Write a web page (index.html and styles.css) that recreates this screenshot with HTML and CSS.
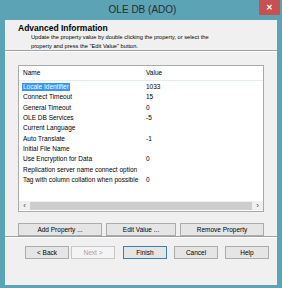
FILE: index.html
```html
<!DOCTYPE html>
<html lang="en">
<head>
    <title>OLE DB (ADO)</title>
    <link rel="stylesheet" href="styles.css">
</head>
<body>
<div class="window">
    <div class="titlebar">
        <span></span>
        <span class="title">OLE DB (ADO)</span>
        <span class="close">&#x2715;</span>
    </div>
    <div class="client">
        <div class="header">
            <h1>Advanced Information</h1>
            <p>Update the property value by double clicking the property, or select the<br>property and press the "Edit Value" button.</p>
        </div>
        <div class="content">
            <div class="listbox">
                <div class="list-head">
                    <span class="col-name">Name</span>
                    <span class="col-value">Value</span>
                </div>
                <div class="rows">
                    <div class="row selected"><span class="col-name"><em>Locale Identifier</em></span><span class="col-value">1033</span></div>
                    <div class="row"><span class="col-name">Connect Timeout</span><span class="col-value">15</span></div>
                    <div class="row"><span class="col-name">General Timeout</span><span class="col-value">0</span></div>
                    <div class="row"><span class="col-name">OLE DB Services</span><span class="col-value">-5</span></div>
                    <div class="row"><span class="col-name">Current Language</span><span class="col-value"></span></div>
                    <div class="row"><span class="col-name">Auto Translate</span><span class="col-value">-1</span></div>
                    <div class="row"><span class="col-name">Initial File Name</span><span class="col-value"></span></div>
                    <div class="row"><span class="col-name">Use Encryption for Data</span><span class="col-value">0</span></div>
                    <div class="row"><span class="col-name">Replication server name connect option</span><span class="col-value"></span></div>
                    <div class="row"><span class="col-name">Tag with column collation when possible</span><span class="col-value">0</span></div>
                </div>
                <div class="hscroll">
                    <span class="arrow">&lsaquo;</span>
                    <span class="thumb"></span>
                    <span class="arrow">&rsaquo;</span>
                </div>
            </div>
            <div class="actions">
                <button class="wide">Add Property ...</button>
                <button class="mid">Edit Value ...</button>
                <button class="wide">Remove Property</button>
            </div>
        </div>
        <div class="footer">
            <button>&lt; Back</button>
            <button class="next" disabled>Next &gt;</button>
            <button class="default">Finish</button>
            <button>Cancel</button>
            <button>Help</button>
        </div>
    </div>
</div>
</body>
</html>
```

FILE: styles.css
```css
body {
margin: 0;
font-family: "Liberation Sans", Arial, sans-serif;
font-size: 6.5px;
color: #000;
}

.window {
width: 282px;
height: 288px;
box-sizing: border-box;
padding: 0 5px 5px;
background-color: #5ca3b6;
display: flex;
flex-direction: column;
}

.titlebar {
height: 21px;
display: grid;
grid-template-columns: 1fr auto 1fr;
align-items: start;
margin-right: -3px;
}

.title {
font-size: 10px;
color: #2b2b2b;
line-height: 20px;
}

.close {
justify-self: end;
width: 21px;
height: 15px;
background-color: #c75050;
color: #fff;
font-size: 8px;
font-weight: bold;
line-height: 15px;
text-align: center;
}

.client {
flex: 1;
background-color: #f0f0f0;
display: flex;
flex-direction: column;
}

.header {
height: 31px;
box-sizing: border-box;
padding: 3px 0 0 13px;
border-bottom: 1px solid #a0a0a0;
box-shadow: 0 1px 0 #fff;
}

.header h1 {
margin: 0;
font-size: 8.5px;
font-weight: bold;
line-height: 10px;
}

.header p {
margin: 0 0 0 13px;
font-size: 5.7px;
line-height: 9px;
}

.content {
flex: 1;
padding: 14px 13px 0;
}

.listbox {
height: 147px;
box-sizing: border-box;
border: 1px solid #aaa;
background-color: #fff;
display: flex;
flex-direction: column;
}

.list-head {
display: flex;
height: 14px;
line-height: 14px;
border-bottom: 1px solid #e5ebf2;
padding-left: 4px;
}

.col-name {
width: 123px;
white-space: nowrap;
}

.rows {
flex: 1;
padding-top: 1px;
}

.row {
display: flex;
height: 10.33px;
line-height: 10.33px;
padding-left: 4px;
}

.row em {
font-style: normal;
background-color: #3399ff;
color: #fff;
padding: 0 1px;
margin-left: -1px;
display: inline-block;
line-height: 8px;
}

.hscroll {
height: 9px;
margin-bottom: 1px;
display: flex;
align-items: center;
background-color: #f0f0f0;
}

.hscroll .arrow {
width: 11px;
text-align: center;
font-size: 8px;
line-height: 9px;
color: #444;
}

.hscroll .thumb {
flex: 1;
height: 8px;
background-color: #cdcdcd;
}

.actions {
display: flex;
gap: 4px;
margin-top: 11px;
}

button {
font-family: "Liberation Sans", Arial, sans-serif;
font-size: 6.5px;
color: #000;
height: 13px;
padding: 0;
background-color: #e5e5e5;
border: 1px solid #acacac;
}

.actions .wide {
width: 84px;
}

.actions .mid {
width: 70px;
}

.footer {
height: 49px;
box-sizing: border-box;
border-top: 1px solid #a0a0a0;
box-shadow: inset 0 1px 0 #fff;
padding: 9px 6px 0 20px;
display: flex;
gap: 7px;
}

.footer button {
width: 44px;
}

.footer .next {
margin-left: -5px;
color: #a0a0a0;
background-color: #f4f4f4;
border-color: #c8c8c8;
}

.footer .default {
border-color: #3c7fb1;
margin-left: 1px;
}
```
